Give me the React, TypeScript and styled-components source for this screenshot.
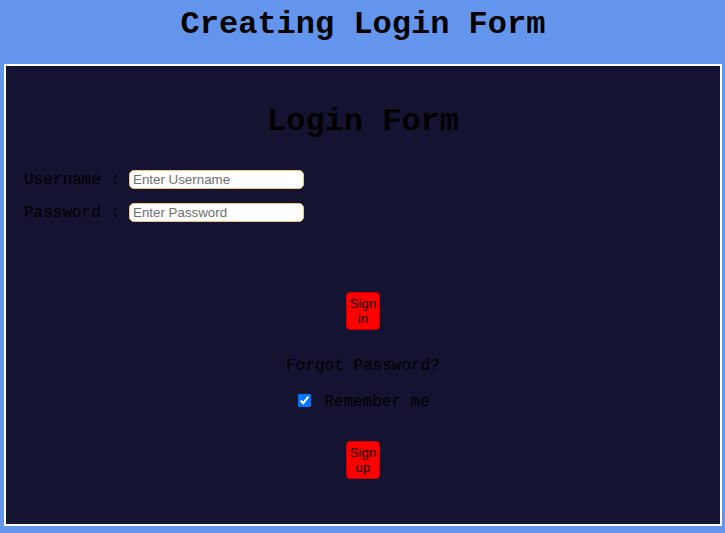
import React from "react";
import styled, { createGlobalStyle } from "styled-components";

const GlobalStyle = createGlobalStyle`
  html, body {
    margin: 0;
    padding: 0;
    background: #6495ed;
  }
  body {
    font-family: "Liberation Mono", "Courier New", monospace;
  }
  * { box-sizing: border-box; }
`;

const Page = styled.div`
  display: flex;
  flex-direction: column;
  height: 533px;
  padding: 7px 3px 7px 4px;
`;

const Title = styled.h1`
  margin: 0 0 21px;
  font-family: "Liberation Mono", "Courier New", monospace;
  font-size: 32px;
  line-height: 36px;
  font-weight: bold;
  text-align: center;
  color: #000;
`;

const Card = styled.div`
  flex: 1;
  border: 2px solid #fff;
  background: #141432;
  display: flex;
  flex-direction: column;
  padding: 38px 0 0 18px;
`;

const CardTitle = styled.h2`
  margin: 0 0 30px -18px;
  font-size: 32px;
  line-height: 36px;
  font-weight: bold;
  text-align: center;
  color: #000;
`;

const Field = styled.div<{ $gap?: number }>`
  display: flex;
  align-items: center;
  gap: 9px;
  margin-bottom: ${(p) => p.$gap ?? 0}px;
`;

const Label = styled.label`
  font-size: 16px;
  line-height: 18px;
  color: #000;
  white-space: pre;
`;

const Input = styled.input`
  width: 175px;
  height: 19px;
  border: 1px solid #f3c27c;
  border-radius: 5px;
  background: #fff;
  padding: 0 3px;
  font-family: "Liberation Sans", Arial, sans-serif;
  font-size: 13.33px;
  color: #000;
  outline: none;
  &::placeholder {
    color: #6f6f6f;
  }
`;

const Center = styled.div`
  margin-left: -18px;
  display: flex;
  flex-direction: column;
  align-items: center;
`;

const Button = styled.button<{ $top: number }>`
  margin-top: ${(p) => p.$top}px;
  width: 34px;
  height: 38px;
  padding: 0;
  border: 1px solid #c80000;
  border-radius: 4px;
  background: #ff0000;
  color: #000;
  font-family: "Liberation Sans", Arial, sans-serif;
  font-size: 13.33px;
  line-height: 15px;
  text-align: center;
  cursor: pointer;
`;

const Forgot = styled.p`
  margin: 27px 0 0;
  font-size: 16px;
  line-height: 18px;
  color: #000;
`;

const Remember = styled.label`
  margin-top: 18px;
  display: flex;
  align-items: center;
  gap: 13px;
  font-size: 16px;
  line-height: 18px;
  color: #000;
  padding-left: 2px;
`;

const Check = styled.input`
  margin: 0 0 4px;
  width: 13px;
  height: 13px;
  accent-color: #0075ff;
`;

export default function App() {
  return (
    <>
      <GlobalStyle />
      <Page>
        <Title>Creating Login Form</Title>
        <Card>
          <CardTitle>Login Form</CardTitle>
          <Field $gap={14}>
            <Label htmlFor="user">Username :</Label>
            <Input id="user" type="text" placeholder="Enter Username" />
          </Field>
          <Field>
            <Label htmlFor="pass">Password :</Label>
            <Input id="pass" type="password" placeholder="Enter Password" />
          </Field>
          <Center>
            <Button $top={70}>Sign in</Button>
            <Forgot>Forgot Password?</Forgot>
            <Remember>
              <Check type="checkbox" defaultChecked />
              Remember me
            </Remember>
            <Button $top={30}>Sign up</Button>
          </Center>
        </Card>
      </Page>
    </>
  );
}
